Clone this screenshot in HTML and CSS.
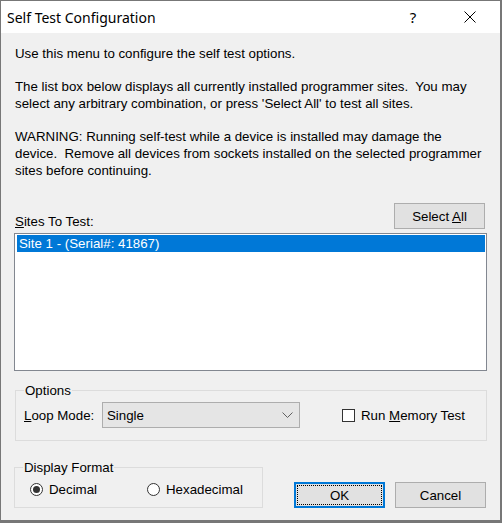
FILE: index.html
```html
<!DOCTYPE html>
<html>
<head>
<meta charset="utf-8">
<link rel="stylesheet" href="styles.css">
</head>
<body>
<div class="window">
  <div class="titlebar">
    <span class="title">Self Test Configuration</span>
    <span class="help">?</span>
    <span class="close">
      <svg width="12" height="12" viewBox="0 0 12 12"><path d="M0.5 0.5 L11.5 11.5 M11.5 0.5 L0.5 11.5" stroke="#000" stroke-width="1" fill="none"/></svg>
    </span>
  </div>
  <div class="content">
    <p class="para">Use this menu to configure the self test options.</p>
    <p class="para">The list box below displays all currently installed programmer sites.&nbsp; You may<br>select any arbitrary combination, or press 'Select All' to test all sites.</p>
    <p class="para">WARNING: Running self-test while a device is installed may damage the<br>device.&nbsp; Remove all devices from sockets installed on the selected programmer<br>sites before continuing.</p>
    <div class="sites-head">
      <span class="label"><u>S</u>ites To Test:</span>
      <button class="btn select-all">Select <u>A</u>ll</button>
    </div>
    <div class="listbox">
      <div class="item selected">Site 1 - (Serial#: 41867)</div>
    </div>
    <fieldset class="group options">
      <legend>Options</legend>
      <div class="options-row">
        <span class="loop-label"><u>L</u>oop Mode:</span>
        <div class="combo">
          <span>Single</span>
          <svg class="chev" width="11" height="6" viewBox="0 0 11 6"><polyline points="0.5,0.5 5.5,5.5 10.5,0.5" fill="none" stroke="#606060" stroke-width="1"/></svg>
        </div>
        <span class="checkbox"></span>
        <span class="check-label">Run <u>M</u>emory Test</span>
      </div>
    </fieldset>
    <div class="bottom-row">
      <fieldset class="group display">
        <legend>Display Format</legend>
        <div class="radio-row">
          <span class="radio-item dec"><span class="radio checked"></span>Decimal</span>
          <span class="radio-item"><span class="radio"></span>Hexadecimal</span>
        </div>
      </fieldset>
      <div class="buttons">
        <button class="btn ok"><span class="focus">OK</span></button>
        <button class="btn cancel">Cancel</button>
      </div>
    </div>
  </div>
</div>
</body>
</html>
```
FILE: styles.css
```css
html, body {
  margin: 0;
  padding: 0;
  background: #f0f0f0;
}
.window {
  width: 502px;
  height: 523px;
  box-sizing: border-box;
  border: 1px solid #777777;
  border-right-width: 2px;
  border-bottom-width: 3px;
  background: #f0f0f0;
  font-family: "Liberation Sans", Arial, sans-serif;
  font-size: 13.3px;
  color: #000;
  overflow: hidden;
}
.titlebar {
  height: 32px;
  background: #ffffff;
  display: flex;
  align-items: center;
}
.title {
  font-family: "Noto Sans", sans-serif;
  font-size: 14px;
  margin-left: 6px;
  flex: 1;
}
.help {
  font-family: "Noto Sans", sans-serif;
  font-size: 15px;
  width: 46px;
  text-align: center;
}
.close {
  width: 46px;
  margin-left: 11px;
  margin-right: 7px;
  display: flex;
  justify-content: center;
  align-items: center;
}
.close svg { display: block; }
.content {
  padding: 12px 13px 0 13px;
}
.para {
  margin: 0 0 16px 1px;
  line-height: 17px;
  white-space: nowrap;
}
.para:nth-of-type(3) { margin-bottom: 0; }
.sites-head {
  margin-top: 24px;
  display: flex;
  justify-content: space-between;
  align-items: flex-end;
}
.label {
  line-height: 17px;
  margin-left: 1px;
}
.btn {
  font-family: "Liberation Sans", Arial, sans-serif;
  font-size: 13.3px;
  color: #000;
  background: #e1e1e1;
  border: 1px solid #adadad;
  width: 91px;
  height: 26px;
  padding: 0;
  margin: 0;
  box-sizing: border-box;
}
.select-all {
  margin-right: 2px;
  margin-bottom: 1px;
}
.listbox {
  margin-top: 3px;
  height: 138px;
  box-sizing: border-box;
  border: 1px solid #828790;
  background: #ffffff;
  padding: 1px 1px 1px 2px;
}
.item {
  height: 17px;
  line-height: 17px;
  padding-left: 2px;
}
.item.selected {
  background: #0078d7;
  color: #ffffff;
}
.group {
  margin: 0;
  border: 1px solid #dcdcdc;
  padding: 0 8px;
  min-width: 0;
}
.group legend {
  padding: 0 1px;
  line-height: 17px;
}
.options {
  margin-top: 11px;
  margin-left: 1px;
  padding-bottom: 12px;
}
.options-row {
  display: flex;
  align-items: center;
  margin-top: 3px;
}
.loop-label {
  width: 78px;
  line-height: 17px;
}
.combo {
  width: 198px;
  height: 26px;
  box-sizing: border-box;
  border: 1px solid #adadad;
  background: #e5e5e5;
  display: flex;
  align-items: center;
  justify-content: space-between;
  padding: 0 6px 0 4px;
}
.chev { display: block; }
.checkbox {
  width: 13px;
  height: 13px;
  box-sizing: border-box;
  border: 1px solid #333333;
  background: #ffffff;
  margin-left: 42px;
}
.check-label {
  margin-left: 6px;
  line-height: 17px;
}
.bottom-row {
  display: flex;
  align-items: flex-end;
  margin-top: 18px;
}
.display {
  width: 249px;
  box-sizing: border-box;
  padding-bottom: 9px;
}
.radio-row {
  display: flex;
  margin-top: 5px;
  margin-left: 7px;
}
.radio-item {
  display: flex;
  align-items: center;
  line-height: 17px;
}
.radio-item.dec { width: 117px; }
.radio {
  width: 13px;
  height: 13px;
  box-sizing: border-box;
  border: 1px solid #333333;
  border-radius: 50%;
  background: #ffffff;
  margin-right: 6px;
  display: flex;
  align-items: center;
  justify-content: center;
}
.radio.checked::after {
  content: "";
  width: 7px;
  height: 7px;
  border-radius: 50%;
  background: #333333;
}
.buttons {
  display: flex;
  margin-left: 31px;
  gap: 10px;
}
.ok {
  border: 2px solid #0078d7;
  padding: 1px;
}
.ok .focus {
  display: flex;
  align-items: center;
  justify-content: center;
  height: 100%;
  border: 1px dotted #000;
  box-sizing: border-box;
}
```
